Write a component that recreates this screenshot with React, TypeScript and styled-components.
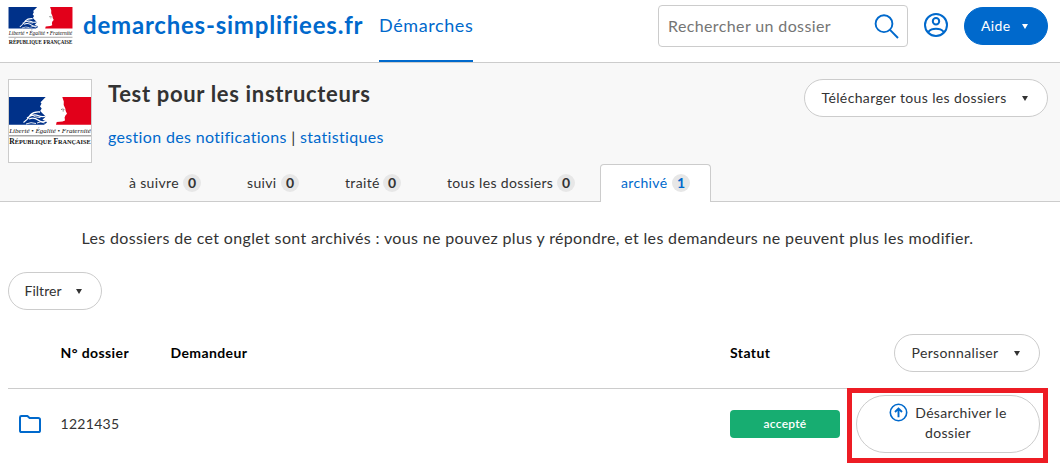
import React from "react";
import styled, { createGlobalStyle } from "styled-components";

const BLUE = "#0069cc";
const LINE = "#cccccc";
const TEXT = "#333333";

const GlobalStyle = createGlobalStyle`
  * { box-sizing: border-box; }
  body {
    margin: 0;
    background: #fff;
    color: ${TEXT};
    font-family: Lato, "Liberation Sans", sans-serif;
    font-size: 16px;
    line-height: 20px;
    letter-spacing: 0.34px;
  }
`;

const Page = styled.div`
  width: 1060px;
  height: 468px;
  overflow: hidden;
  background: #fff;
`;

const Header = styled.header`
  display: flex;
  align-items: flex-start;
  height: 63px;
  padding: 0 12px 0 8px;
  border-bottom: 1px solid ${LINE};
`;

const HeaderLogo = styled.div`
  width: 75px;
  padding-top: 7px;
  svg { display: block; width: 65px; height: 39px; }
`;

const Brand = styled.a`
  width: 296px;
  padding-top: 10px;
  color: ${BLUE};
  font-size: 24px;
  font-weight: 700;
  line-height: 30px;
  letter-spacing: 0.79px;
  white-space: nowrap;
`;

const NavLink = styled.a`
  width: 94px;
  height: 62px;
  padding-top: 14px;
  border-bottom: 2px solid ${BLUE};
  color: ${BLUE};
  font-size: 18px;
  line-height: 23px;
  letter-spacing: 0.6px;
`;

const Search = styled.div`
  display: flex;
  align-items: center;
  justify-content: space-between;
  width: 250px;
  height: 42px;
  margin: 5px 0 0 auto;
  padding: 0 8px 0 9px;
  border: 1px solid ${LINE};
  border-radius: 4px;
  color: #757575;
  letter-spacing: 0.38px;
  svg { display: block; }
`;

const Account = styled.div`
  margin: 13px 0 0 16px;
  height: 24px;
  svg { display: block; }
`;

const Pill = styled.button<{ $primary?: boolean; $width: number; $tight?: boolean }>`
  display: flex;
  align-items: center;
  justify-content: space-between;
  flex: none;
  width: ${(p) => p.$width}px;
  height: 38px;
  padding: 0 19px 0 ${(p) => (p.$tight ? 15.5 : p.$primary ? 16 : 16.5)}px;
  border: 1px solid ${(p) => (p.$primary ? BLUE : LINE)};
  border-radius: 30px;
  background: ${(p) => (p.$primary ? BLUE : "#fff")};
  color: ${(p) => (p.$primary ? "#fff" : TEXT)};
  font: 400 14px/20px Lato, "Liberation Sans", sans-serif;
  letter-spacing: ${(p) => (p.$tight ? 0.02 : 0.37)}px;
  white-space: nowrap;
  &::after {
    content: "";
    border: solid transparent;
    border-width: 5px 3px 0;
    border-top-color: currentColor;
  }
`;

const HelpSlot = styled.div`
  margin: 7px 0 0 16px;
`;

const Procedure = styled.section`
  display: flex;
  flex-direction: column;
  justify-content: space-between;
  height: 139px;
  background: #f8f8f8;
  box-shadow: inset 0 -1px ${LINE};
`;

const ProcedureTop = styled.div`
  display: flex;
  padding: 16px 12px 0 8px;
`;

const Thumbnail = styled.div`
  display: flex;
  align-items: center;
  width: 84px;
  height: 84px;
  padding-top: 2px;
  border: 1px solid ${LINE};
  background: #fff;
  svg { display: block; width: 82px; height: 50px; }
`;

const ProcedureInfo = styled.div`
  flex: 1;
  padding-left: 16px;
`;

const Title = styled.h1`
  margin: 1px 0 0;
  font-size: 22px;
  font-weight: 700;
  line-height: 28px;
  letter-spacing: 0.66px;
`;

const Links = styled.p`
  margin: 19px 0 0;
  color: ${TEXT};
  letter-spacing: 0.33px;
  a { color: ${BLUE}; }
`;

const Tabs = styled.nav`
  display: flex;
  gap: 4px;
  height: 38px;
  margin-top: -15px;
  padding-left: 108px;
`;

const Tab = styled.a<{ $active?: boolean; $width: number }>`
  display: flex;
  align-items: center;
  justify-content: space-between;
  width: ${(p) => p.$width}px;
  padding: 0 20px 2px;
  border: 1px solid ${(p) => (p.$active ? LINE : "transparent")};
  border-bottom: 0;
  border-radius: 4px 4px 0 0;
  background: ${(p) => (p.$active ? "#fff" : "transparent")};
  color: ${(p) => (p.$active ? BLUE : TEXT)};
  font-size: 14px;
  white-space: nowrap;
`;

const Count = styled.span`
  width: 18px;
  height: 18px;
  border-radius: 9px;
  background: #e7e7e7;
  font-weight: 700;
  line-height: 18px;
  letter-spacing: 0;
  text-align: center;
`;

const Notice = styled.p`
  margin: 26px 0 24px;
  padding-right: 5px;
  letter-spacing: 0.35px;
  text-align: center;
  white-space: nowrap;
`;

const Content = styled.main`
  padding: 0 12px 0 8px;
`;

const Row = styled.div<{ $head?: boolean }>`
  display: grid;
  grid-template-columns: 52.5px 110px 559.5px 110px 1fr;
  align-items: center;
  height: ${(p) => (p.$head ? 79 : 70)}px;
  padding: ${(p) => (p.$head ? "8px 8px 0 0" : "0 8px 0 0")};
  border-bottom: ${(p) => (p.$head ? `1px solid ${LINE}` : "0")};
  font-size: 14px;
  color: ${(p) => (p.$head ? "#000" : TEXT)};
  font-weight: ${(p) => (p.$head ? 700 : 400)};
  letter-spacing: ${(p) => (p.$head ? 0.4 : 0.3)}px;
`;

const FolderCell = styled.div`
  padding-left: 10px;
  svg { display: block; }
`;

const ActionCell = styled.div`
  display: flex;
  justify-content: flex-end;
`;

const Status = styled.span`
  height: 28px;
  margin-top: -1px;
  border-radius: 4px;
  background: #17ad71;
  color: #fff;
  font-size: 12px;
  font-weight: 600;
  line-height: 27px;
  letter-spacing: 0.28px;
  text-align: center;
`;

const Unarchive = styled.button`
  position: relative;
  width: 184px;
  height: 58px;
  margin-top: -1px;
  padding: 0 31px 1px;
  border: 1px solid ${LINE};
  border-radius: 30px;
  background: #fff;
  color: ${TEXT};
  font: 400 14px/20px Lato, "Liberation Sans", sans-serif;
  letter-spacing: 0.3px;
  text-align: center;
  svg { margin-right: 7px; vertical-align: -4px; }
`;

const Highlight = styled.span`
  position: absolute;
  inset: -8px -9px -11px -10px;
  border: 5px solid #ed1c24;
  pointer-events: none;
`;

const Republic = () => (
  <svg viewBox="0 0 82 50" role="img" aria-label="République Française">
    <path fill="#003189" d="M0 0H36.7L33.5 3.2 31.5 5.2 32.5 6.5 31 9.5 32.7 11.5 31.2 14 33.6 16.6 36.8 19.5 33.4 22.8 36.6 24 38 25.6 35 27.7H0Z" />
    <path fill="#e2001a" d="M53.3 0H82V27.7H47L47.7 25 53.5 24.5 56 23.5 55.6 20.5 56.4 18.4 58 16.8 56.7 14 56.3 11.5 54.7 8 54.8 4.5Z" />
    <g fill="none" stroke="#fff">
      <path strokeWidth="1.3" d="M14.5 25.5Q19 22.5 21.5 17.8Q25 14.4 31 15M18 21Q24 16.4 29 18.5Q33 20.5 37 19M20 22Q25 20 29 23T37 24" />
      <path strokeWidth=".9" d="M17 27Q22 24.6 27 26.5M23 18Q26 20.5 31.5 20.6M28 26Q32 23.6 35.5 26" />
    </g>
    <path fill="none" stroke="#777" strokeWidth=".9" d="M52 12.6Q53.6 11.6 55.4 12.5M53.5 13.9H55" />
    <text x="0.2" y="35.6" fontFamily="Liberation Serif" fontStyle="italic" fontSize="6.6" letterSpacing="0" fill="#111" textLength="81.6" lengthAdjust="spacingAndGlyphs">Liberté • Égalité • Fraternité</text>
    <path fill="#aaa" d="M0 38H82V39.4H0Z" />
    <text x="0.3" y="47.2" fontFamily="Liberation Serif" fontWeight="700" fontSize="7.8" letterSpacing="0" fill="#111" textLength="81.4" lengthAdjust="spacingAndGlyphs">
      R<tspan fontSize="6.5">ÉPUBLIQUE</tspan> F<tspan fontSize="6.5">RANÇAISE</tspan>
    </text>
  </svg>
);

const SearchIcon = () => (
  <svg width="25" height="25" viewBox="0 0 25 25" fill="none" stroke={BLUE} strokeWidth="1.9">
    <circle cx="10" cy="9.700" r="8.400" />
    <path d="M16 15.800L24 24" />
  </svg>
);

const AccountIcon = () => (
  <svg width="24" height="24" viewBox="0 0 24 24" fill="none" stroke={BLUE} strokeWidth="2">
    <circle cx="12" cy="12" r="11" />
    <circle cx="12" cy="8.2" r="3.2" />
    <path d="M4.8 19.6V18.4C6.2 16.7 8.6 15.8 12 15.8S17.8 16.7 19.2 18.4V19.6" />
  </svg>
);

const FolderIcon = () => (
  <svg width="24" height="20" viewBox="0 0 24 20" fill="none" stroke={BLUE} strokeWidth="2" strokeLinejoin="round">
    <path d="M3.4 2H9.4L11.6 4H20.2Q22 4 22 5.6V16.4Q22 18 20.4 18H3.6Q2 18 2 16.4V3.4Q2 2 3.4 2Z" />
  </svg>
);

const UpIcon = () => (
  <svg width="19" height="19" viewBox="0 0 19 19" fill="none" stroke={BLUE} strokeWidth="1.6">
    <circle cx="9.5" cy="9.5" r="8.2" />
    <path strokeWidth="1.9" d="M9.5 14.3V5.7M6 9L9.5 5.5L13 9" />
  </svg>
);

const tabs = [
  { label: "à suivre", count: 0, width: 114 },
  { label: "suivi", count: 0, width: 94 },
  { label: "traité", count: 0, width: 98 },
  { label: "tous les dossiers", count: 0, width: 170 },
  { label: "archivé", count: 1, width: 111, active: true },
];

export default function App() {
  return (
    <Page>
      <GlobalStyle />
      <Header>
        <HeaderLogo><Republic /></HeaderLogo>
        <Brand>demarches-simplifiees.fr</Brand>
        <NavLink>Démarches</NavLink>
        <Search>
          <span>Rechercher un dossier</span>
          <SearchIcon />
        </Search>
        <Account><AccountIcon /></Account>
        <HelpSlot><Pill $primary $width={84}>Aide</Pill></HelpSlot>
      </Header>

      <Procedure>
        <ProcedureTop>
          <Thumbnail><Republic /></Thumbnail>
          <ProcedureInfo>
            <Title>Test pour les instructeurs</Title>
            <Links><a>gestion des notifications</a> | <a>statistiques</a></Links>
          </ProcedureInfo>
          <Pill $width={244}>Télécharger tous les dossiers</Pill>
        </ProcedureTop>
        <Tabs>
          {tabs.map((t) => (
            <Tab key={t.label} $active={t.active} $width={t.width}>
              {t.label}
              <Count>{t.count}</Count>
            </Tab>
          ))}
        </Tabs>
      </Procedure>

      <Notice>
        Les dossiers de cet onglet sont archivés : vous ne pouvez plus y répondre, et les demandeurs ne peuvent plus les modifier.
      </Notice>

      <Content>
        <Pill $tight $width={94}>Filtrer</Pill>
        <Row $head>
          <span />
          <span>N° dossier</span>
          <span>Demandeur</span>
          <span>Statut</span>
          <ActionCell><Pill $width={146}>Personnaliser</Pill></ActionCell>
        </Row>
        <Row>
          <FolderCell><FolderIcon /></FolderCell>
          <span>1221435</span>
          <span />
          <Status>accepté</Status>
          <ActionCell>
            <Unarchive>
              <UpIcon />
              Désarchiver le dossier
              <Highlight />
            </Unarchive>
          </ActionCell>
        </Row>
      </Content>
    </Page>
  );
}
